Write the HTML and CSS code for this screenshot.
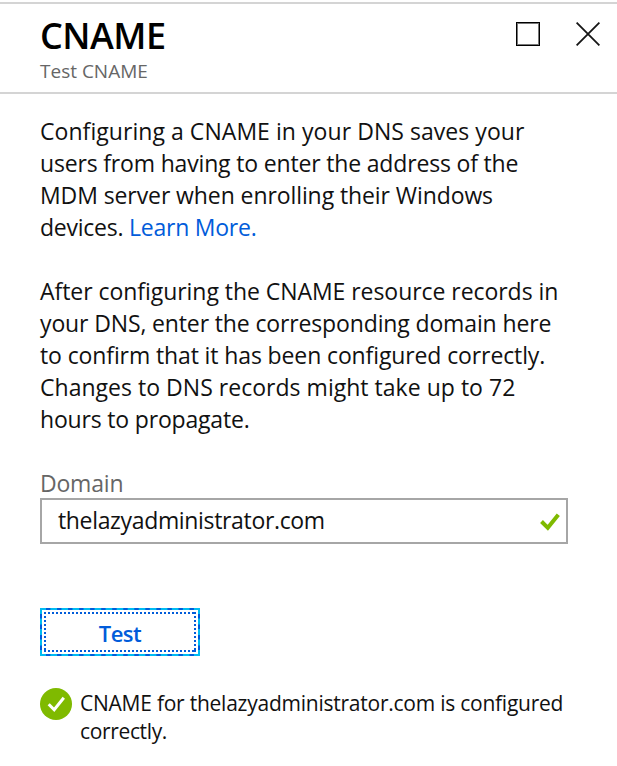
FILE: index.html
```
<!DOCTYPE html>
<html lang="en">
<head>
<meta charset="utf-8">
<title>CNAME</title>
<link rel="stylesheet" href="styles.css">
</head>
<body>
<header class="header">
  <div>
    <h1 class="title">CNAME</h1>
    <p class="subtitle">Test CNAME</p>
  </div>
  <div class="window-actions">
    <svg width="24" height="24" viewBox="0 0 24 24"><rect x="1" y="1" width="22" height="22" fill="none" stroke="#777" stroke-width="2"/><rect x=".5" y=".5" width="23" height="23" fill="none" stroke="#000"/></svg>
    <svg width="24" height="24" viewBox="0 0 24 24"><path d="M.6.6 23.4 23.4M23.4.6.6 23.4" fill="none" stroke="#151515" stroke-width="1.8"/></svg>
  </div>
</header>
<main class="content">
  <p class="copy">
    <span class="line l1">Configuring a CNAME in your DNS saves your</span>
    <span class="line l2">users from having to enter the address of the</span>
    <span class="line l3">MDM server when enrolling their Windows</span>
    <span class="line l4">devices. <a class="link" href="#">Learn More.</a></span>
  </p>
  <p class="copy">
    <span class="line l5">After configuring the CNAME resource records in</span>
    <span class="line l6">your DNS, enter the corresponding domain here</span>
    <span class="line l7">to confirm that it has been configured correctly.</span>
    <span class="line l8">Changes to DNS records might take up to 72</span>
    <span class="line l9">hours to propagate.</span>
  </p>
  <div class="label">Domain</div>
  <div class="field">
    <span class="value">thelazyadministrator.com</span>
    <svg class="check" width="20" height="18" viewBox="0 0 20 18"><path d="M1.5 8.5 7.8 14.8 18.3 1.8" fill="none" stroke="#7fba00" stroke-width="4"/></svg>
  </div>
  <button class="test"><svg class="frame" width="160" height="48" viewBox="0 0 160 48"><rect x="1" y="1" width="158" height="46" fill="none" stroke="#00bcf2" stroke-width="2"/><path d="M6 1H154M6 47H154" fill="none" stroke="#015cda" stroke-width="2" stroke-dasharray="4.4 6.64"/><path d="M1 6V42M159 6V42" fill="none" stroke="#015cda" stroke-width="2" stroke-dasharray="4.4 6.1"/><path d="M4 5H156M4 43H156M5 8V42M155 8V42" fill="none" stroke="#015cda" stroke-width="2" stroke-dasharray="2 2"/><path d="M154 4h2v2h-2zM154 42h2v2h-2z" fill="#015cda"/></svg><span class="test-label">Test</span></button>
  <div class="status">
    <svg class="status-icon" width="32" height="32" viewBox="0 0 32 32"><circle cx="16" cy="16" r="16" fill="#7fba00"/><path d="M8.7 16.3 14.2 21.8 23.8 9.7" fill="none" stroke="#fff" stroke-width="3"/></svg>
    <p class="message"><span class="line s1">CNAME for thelazyadministrator.com is configured</span><span class="line s2">correctly.</span></p>
  </div>
</main>
</body>
</html>
```
FILE: styles.css
```
* { box-sizing: border-box; }
body { margin: 0; width: 617px; height: 766px; overflow: hidden; background: #fff; color: #111; font-family: "Open Sans", "Noto Sans", sans-serif; }
h1, p { margin: 0; }
.header { display: flex; justify-content: space-between; margin-top: 2px; height: 92px; padding: 0 17px 0 40px; border-top: 2px solid #d4d4d4; border-bottom: 2px solid #d4d4d4; }
.title { margin-top: 9px; font-size: 36px; line-height: 46px; font-weight: 600; letter-spacing: -.5px; color: #000; }
.subtitle { font-size: 19px; line-height: 24px; color: #666; }
.window-actions { display: flex; gap: 36px; padding-top: 18px; }
.content { padding: 21px 49px 0 40px; }
.copy { margin-bottom: 32px; font-size: 23px; line-height: 32px; }
.line { display: block; white-space: nowrap; }
.l1 { letter-spacing: .055px; }
.l2 { letter-spacing: -.17px; }
.l3 { letter-spacing: -.09px; }
.l4 { letter-spacing: -.24px; }
.l5 { letter-spacing: -.05px; }
.l6 { letter-spacing: -.135px; }
.l7 { letter-spacing: -.115px; }
.l8 { letter-spacing: .025px; }
.l9 { letter-spacing: -.18px; }
.link { color: #015cda; text-decoration: none; }
.label { padding-top: 1px; font-size: 23px; line-height: 30px; letter-spacing: -.2px; color: #666; }
.field { display: flex; align-items: center; justify-content: space-between; height: 46px; padding: 0 6px 0 16px; border: 2px solid #a6a6a6; font-size: 23px; }
.value { padding-bottom: 2px; letter-spacing: -.34px; }
.check { margin-top: 1px; }
.test { position: relative; display: block; width: 160px; height: 48px; margin: 64px 0 32px; padding: 2px 0 0; border: 0; background: #fff; color: #015cda; font: 600 22px/46px "Open Sans", sans-serif; letter-spacing: -.5px; }
.frame { position: absolute; inset: 0; }
.status { display: flex; gap: 8px; }
.status-icon { flex: none; }
.message { margin-top: 1px; font-size: 21px; line-height: 28px; }
.s1 { letter-spacing: -.24px; }
.s2 { letter-spacing: -.35px; }
```
